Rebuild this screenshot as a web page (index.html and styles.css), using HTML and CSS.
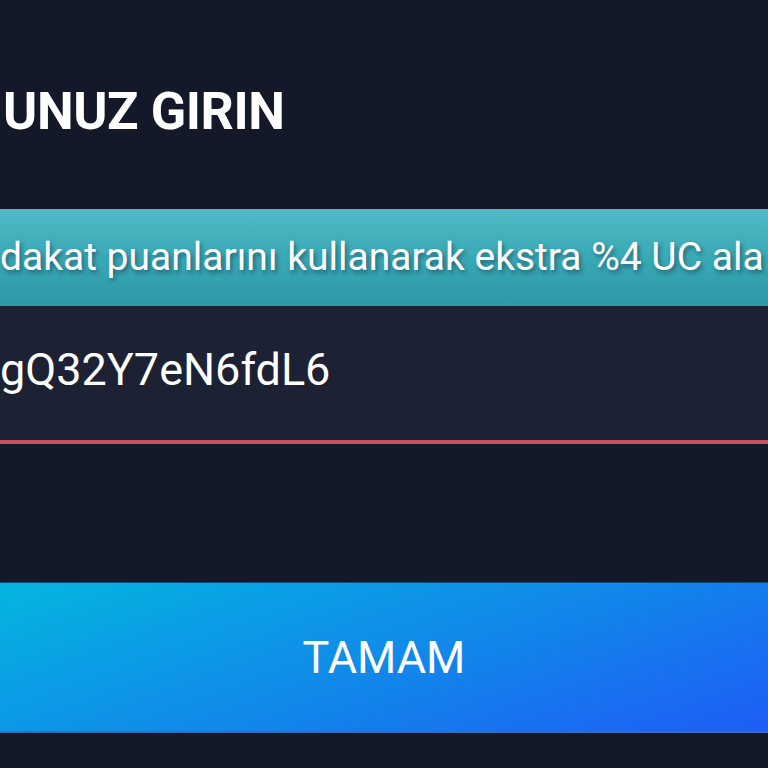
FILE: index.html
```html
<!DOCTYPE html>
<html lang="tr">
<head>
<meta charset="utf-8">
<title>Kod girin</title>
<link rel="stylesheet" href="styles.css">
</head>
<body>
<div class="screen">
  <h1 class="title">UNUZ GIRIN</h1>
  <div class="banner"><span class="banner-text">dakat puanlarını kullanarak ekstra %4 UC ala</span></div>
  <div class="field"><span class="code">gQ32Y7eN6fdL6</span></div>
  <div class="spacer"></div>
  <button class="ok">TAMAM</button>
</div>
</body>
</html>
```
FILE: styles.css
```css
html, body {
  margin: 0;
  padding: 0;
  background: #141929;
}
.screen {
  width: 768px;
  height: 768px;
  overflow: hidden;
  display: flex;
  flex-direction: column;
  font-family: Roboto, "Noto Sans", sans-serif;
  color: #ffffff;
}
.title {
  margin: 0;
  height: 209px;
  box-sizing: border-box;
  padding: 80px 0 0 3px;
  font-size: 52px;
  font-weight: 700;
  line-height: 64px;
  letter-spacing: -0.4px;
  white-space: nowrap;
}
.banner {
  height: 97px;
  background: linear-gradient(180deg, #4fbac6 0%, #38a7b4 55%, #2e98a7 100%);
  display: flex;
  align-items: center;
  white-space: nowrap;
  overflow: hidden;
}
.banner-text {
  font-size: 39px;
  margin-top: -1px;
  text-shadow: 2px 3px 4px rgba(20, 50, 70, 0.55);
}
.field {
  height: 134px;
  background: #1c2133;
  border-bottom: 4px solid #c8525f;
  display: flex;
  align-items: center;
  white-space: nowrap;
}
.code {
  font-size: 45px;
  margin-left: 0;
  margin-top: -7px;
}
.spacer {
  height: 138px;
}
.ok {
  height: 151px;
  width: 768px;
  border: 0;
  padding: 0;
  margin: 0;
  background: linear-gradient(160deg, #04b5e0 0%, #0f8fe8 45%, #1e5df6 100%);
  color: #ffffff;
  font-family: Roboto, "Noto Sans", sans-serif;
  font-size: 45px;
  font-weight: 400;
  border-top: 1px solid #0a4e80;
  border-bottom: 2px solid #3f6ab0;
}
```
